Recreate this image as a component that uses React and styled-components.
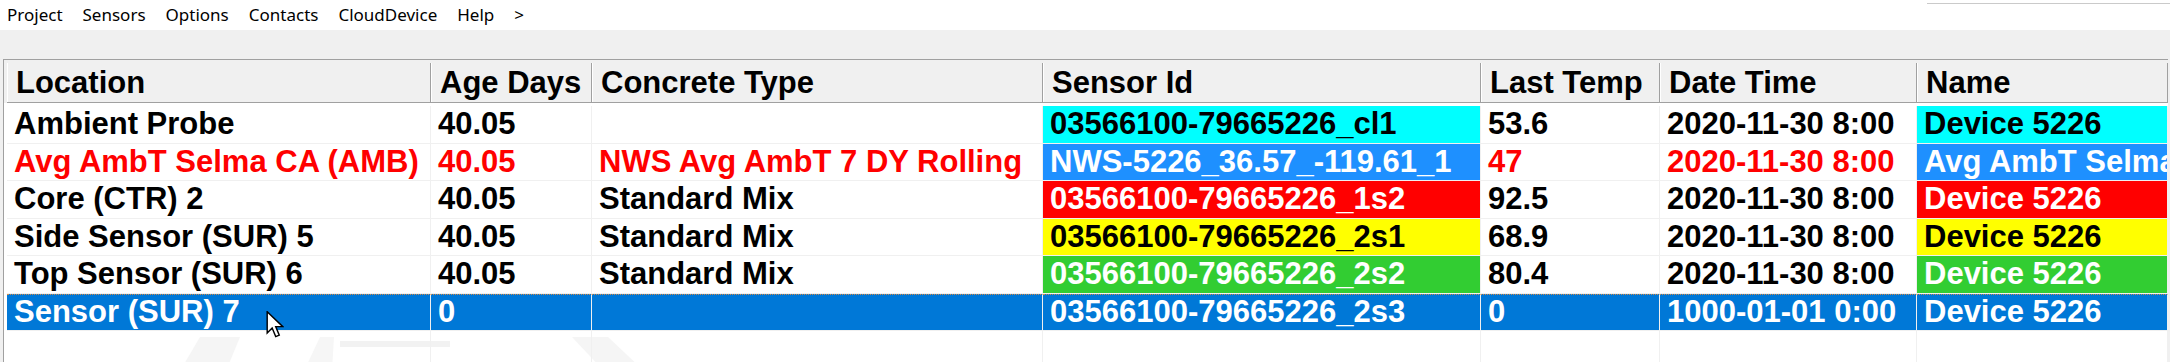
import React from 'react';
import styled, { createGlobalStyle } from 'styled-components';

const GlobalStyle = createGlobalStyle`
  html, body {
    margin: 0;
    padding: 0;
    background: #f0f0f0;
    overflow: hidden;
  }
  #root {
    height: 100vh;
  }
`;

const Window = styled.div`
  position: relative;
  display: flex;
  flex-direction: column;
  width: 2170px;
  height: 100vh;
`;

const MenuBar = styled.div`
  display: flex;
  align-items: center;
  gap: 20px;
  height: 30px;
  padding-left: 7px;
  background: #fff;
  font-family: "Noto Sans", sans-serif;
  font-size: 17px;
  color: #000;
`;

const MenuItem = styled.span`
  line-height: 30px;
`;

const TopRule = styled.div`
  align-self: flex-start;
  margin-left: auto;
  margin-top: 3px;
  width: 243px;
  border-top: 1px solid #cacaca;
`;

const Toolstrip = styled.div`
  height: 29px;
  background: #f0f0f0;
`;

const GridFrame = styled.div`
  flex: 1;
  display: flex;
  flex-direction: column;
  width: 2165px;
  margin-left: 3px;
  box-sizing: border-box;
  border-top: 1px solid #a0a0a0;
  border-left: 1px solid #a0a0a0;
  background: #fff;
  overflow: hidden;
  font-family: "Liberation Sans", Arial, sans-serif;
  font-weight: bold;
  font-size: 31px;
`;

const HeaderRow = styled.div`
  display: flex;
  padding: 3px 0 0 3px;
  background: #f0f0f0;
`;

const HeaderCell = styled.div`
  flex: 0 0 ${p => p.$w}px;
  box-sizing: border-box;
  height: 40px;
  padding-left: 9px;
  display: flex;
  align-items: center;
  background: #f0f0f0;
  border-bottom: 1px solid #a0a0a0;
  border-right: 1px solid #a0a0a0;
  box-shadow: inset 1px 0 0 #fff;
  color: #000;
  white-space: nowrap;
  overflow: hidden;
`;

const Body = styled.div`
  flex: 1;
  display: flex;
  flex-direction: column;
  padding-top: 3px;
`;

const Row = styled.div`
  display: flex;
  padding-left: 3px;
  height: 37.5px;
  color: ${p => p.$color || '#000'};
`;

const Cell = styled.div`
  flex: 0 0 ${p => p.$w}px;
  box-sizing: border-box;
  height: 100%;
  padding-left: 7px;
  display: flex;
  align-items: center;
  background: ${p => p.$bg || 'transparent'};
  color: ${p => p.$fg || 'inherit'};
  border-right: 1px solid #f0f0f0;
  border-bottom: 1px solid #f0f0f0;
  border-top: ${p => (p.$focus ? '1px dotted #d08a4a' : '0')};
  white-space: nowrap;
  overflow: hidden;
`;

const Filler = styled.div`
  position: relative;
  flex: 1;
  display: flex;
  padding-left: 3px;
`;

const FillerCell = styled.div`
  position: relative;
  z-index: 1;
  flex: 0 0 ${p => p.$w}px;
  box-sizing: border-box;
  border-right: 1px solid #f0f0f0;
`;

const Watermark = styled.svg`
  position: absolute;
  left: 0;
  top: 0;
`;

const Pointer = styled.svg`
  position: absolute;
  left: 266px;
  top: 311px;
  z-index: 5;
`;

const columns = [
  { title: 'Location', w: 424 },
  { title: 'Age Days', w: 161 },
  { title: 'Concrete Type', w: 451 },
  { title: 'Sensor Id', w: 438 },
  { title: 'Last Temp', w: 179 },
  { title: 'Date Time', w: 257 },
  { title: 'Name', w: 251 },
];

const tint = {
  cyan: { bg: '#00ffff', fg: '#000' },
  blue: { bg: '#1e90ff', fg: '#fff' },
  red: { bg: '#ff0000', fg: '#fff' },
  yellow: { bg: '#ffff00', fg: '#000' },
  green: { bg: '#32cd32', fg: '#fff' },
};

const rows = [
  { cells: ['Ambient Probe', '40.05', '', '03566100-79665226_cl1', '53.6', '2020-11-30 8:00', 'Device 5226'], tint: 'cyan' },
  { cells: ['Avg AmbT Selma CA (AMB)', '40.05', 'NWS Avg AmbT 7 DY Rolling', 'NWS-5226_36.57_-119.61_1', '47', '2020-11-30 8:00', 'Avg AmbT Selma CA (AMB)'], tint: 'blue', color: '#ff0000' },
  { cells: ['Core (CTR) 2', '40.05', 'Standard Mix', '03566100-79665226_1s2', '92.5', '2020-11-30 8:00', 'Device 5226'], tint: 'red' },
  { cells: ['Side Sensor (SUR) 5', '40.05', 'Standard Mix', '03566100-79665226_2s1', '68.9', '2020-11-30 8:00', 'Device 5226'], tint: 'yellow' },
  { cells: ['Top Sensor (SUR) 6', '40.05', 'Standard Mix', '03566100-79665226_2s2', '80.4', '2020-11-30 8:00', 'Device 5226'], tint: 'green' },
  { cells: ['Sensor (SUR) 7', '0', '', '03566100-79665226_2s3', '0', '1000-01-01 0:00', 'Device 5226'], selected: true },
];

const menu = ['Project', 'Sensors', 'Options', 'Contacts', 'CloudDevice', 'Help', '>'];

function SensorRow({ row }) {
  return (
    <Row $color={row.color}>
      {row.cells.map((text, i) => {
        // sensor id and name columns carry the sensor colour
        const colored = !row.selected && (i === 3 || i === 6) ? tint[row.tint] : null;
        return (
          <Cell
            key={i}
            $w={columns[i].w}
            $bg={row.selected ? '#0078d7' : colored && colored.bg}
            $fg={row.selected ? '#fff' : colored && colored.fg}
            $focus={row.selected}
          >
            {text}
          </Cell>
        );
      })}
    </Row>
  );
}

export default function App() {
  return (
    <Window>
      <GlobalStyle />
      <MenuBar>
        {menu.map(m => (
          <MenuItem key={m}>{m}</MenuItem>
        ))}
        <TopRule />
      </MenuBar>
      <Toolstrip />
      <GridFrame>
        <HeaderRow>
          {columns.map(c => (
            <HeaderCell key={c.title} $w={c.w}>{c.title}</HeaderCell>
          ))}
        </HeaderRow>
        <Body>
          {rows.map((r, i) => (
            <SensorRow key={i} row={r} />
          ))}
          <Filler>
            {/* faint background logo showing through the empty grid */}
            <Watermark width="900" height="40" viewBox="0 0 900 40">
              <polygon points="176,40 196,6 236,6 222,40" fill="#f5f5f5" />
              <polygon points="300,40 316,6 330,6 328,40" fill="#f6f6f6" />
              <rect x="336" y="10" width="110" height="6" fill="#f2f2f2" />
              <polygon points="568,6 604,6 640,40 600,40" fill="#f5f5f5" />
            </Watermark>
            {columns.map(c => (
              <FillerCell key={c.title} $w={c.w} />
            ))}
          </Filler>
        </Body>
      </GridFrame>
      <Pointer width="18" height="27" viewBox="0 0 12 19">
        <path
          d="M0.5 0.5 L0.5 15.5 L4 12 L6.5 18 L9 17 L6.5 11 L11.5 11 Z"
          fill="#fff"
          stroke="#000"
          strokeWidth="1"
          strokeLinejoin="miter"
        />
      </Pointer>
    </Window>
  );
}
